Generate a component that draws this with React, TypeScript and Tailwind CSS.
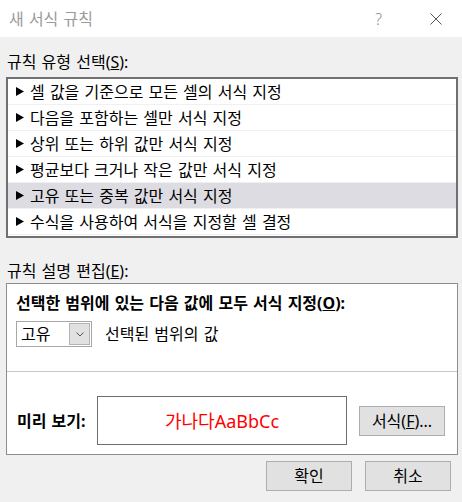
const rules = [
  "셀 값을 기준으로 모든 셀의 서식 지정",
  "다음을 포함하는 셀만 서식 지정",
  "상위 또는 하위 값만 서식 지정",
  "평균보다 크거나 작은 값만 서식 지정",
  "고유 또는 중복 값만 서식 지정",
  "수식을 사용하여 서식을 지정할 셀 결정",
];

function Arrow() {
  return (
    <svg width="8" height="9" viewBox="0 0 8 9" className="shrink-0">
      <polygon points="0,0 8,4.5 0,9" fill="#000" />
    </svg>
  );
}

function Btn({ children }: { children: React.ReactNode }) {
  return (
    <button className="w-[86px] h-[30px] bg-[#e1e1e1] border border-[#adadad] text-[16px] leading-[20px] text-black">
      {children}
    </button>
  );
}

export default function App() {
  const selected = 4;

  return (
    <div className="w-[462px] h-[502px] bg-[#f0f0f0] flex flex-col font-['Noto_Sans','Noto_Sans_CJK_KR',sans-serif] [word-spacing:1px] text-black overflow-hidden">
      {/* title bar */}
      <div className="h-[37px] bg-white flex items-center shrink-0">
        <span className="pl-[9px] text-[16px] leading-[20px] text-[#9a9a9a]">새 서식 규칙</span>
        <span className="ml-auto mr-[48px] text-[16px] leading-[20px] text-[#8a8a8a] font-light">?</span>
        <svg width="12" height="12" viewBox="0 0 12 12" className="mr-[20px]">
          <path d="M0.5 0.5 L11.5 11.5 M11.5 0.5 L0.5 11.5" stroke="#555" strokeWidth="1" />
        </svg>
      </div>

      <div className="mt-[15px] pl-[7px] text-[16px] leading-[20px]">
        규칙 유형 선택(<span className="underline">S</span>):
      </div>

      {/* rule type list */}
      <div className="mt-[5px] ml-[6px] w-[452px] h-[161px] border-2 border-[#707070] bg-white flex flex-col">
        {rules.map((r, i) => (
          <div
            key={r}
            className={
              i === selected
                ? "h-[26px] shrink-0 flex items-center gap-[6px] pl-[8px] bg-[#dcdce2] border-b border-[#f0f0f0]"
                : "h-[26px] shrink-0 flex items-center gap-[6px] pl-[8px] border-b border-[#f0f0f0]"
            }
          >
            <Arrow />
            <span className="text-[16px] leading-[20px] whitespace-nowrap">{r}</span>
          </div>
        ))}
      </div>

      <div className="mt-[23px] pl-[7px] text-[16px] leading-[20px]">
        규칙 설명 편집(<span className="underline">E</span>):
      </div>

      {/* rule description box */}
      <div className="mt-[2px] ml-[6px] w-[452px] h-[172px] border border-[#8c8c8c] bg-white flex flex-col">
        <div className="px-[9px] pt-[9px] h-[88px] border-b border-[#c8c8c8] shrink-0">
          <div className="text-[16px] leading-[20px] font-bold whitespace-nowrap">
            선택한 범위에 있는 다음 값에 모두 서식 지정(<span className="underline">O</span>):
          </div>
          <div className="mt-[8px] flex items-center">
            <div className="w-[76px] h-[26px] border border-[#a8a8a8] flex items-center justify-between pl-[4px] pr-[1px]">
              <span className="text-[16px] leading-[20px]">고유</span>
              <div className="w-[21px] h-[22px] bg-[#e1e1e1] border border-[#b4b4b4] flex items-center justify-center">
                <svg width="8" height="5" viewBox="0 0 8 5">
                  <path d="M0.5 0.5 L4 4 L7.5 0.5" stroke="#555" strokeWidth="1" fill="none" />
                </svg>
              </div>
            </div>
            <span className="ml-[13px] text-[16px] leading-[20px]">선택된 범위의 값</span>
          </div>
        </div>

        <div className="flex items-center pt-[24px] pl-[10px]">
          <span className="w-[80px] text-[16px] leading-[20px] font-bold">미리 보기:</span>
          <div className="w-[250px] h-[49px] border border-[#6e6e6e] flex items-center justify-center">
            <span className="text-[18px] leading-[24px] text-[#ff0000]">가나다AaBbCc</span>
          </div>
          <div className="ml-[12px]">
            <Btn>
              서식(<span className="underline">F</span>)...
            </Btn>
          </div>
        </div>
      </div>

      {/* dialog buttons */}
      <div className="mt-[6px] flex justify-end gap-[13px] pr-[11px]">
        <Btn>확인</Btn>
        <Btn>취소</Btn>
      </div>
    </div>
  );
}
